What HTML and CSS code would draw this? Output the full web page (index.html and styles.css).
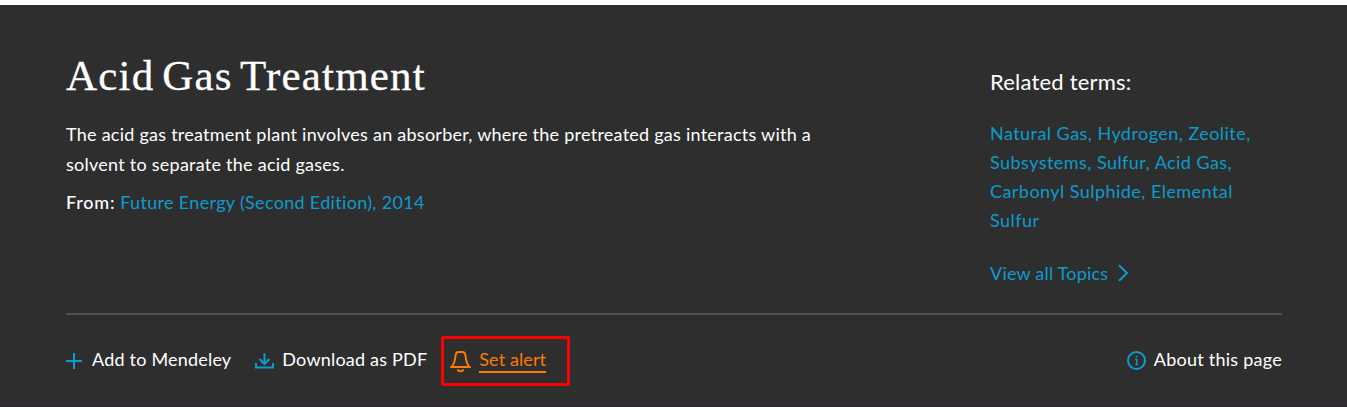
FILE: index.html
```html
<!DOCTYPE html>
<html lang="en">
<head>
    <meta charset="UTF-8">
    <meta name="viewport" content="width=device-width, initial-scale=1.0">
    <title>Acid Gas Treatment</title>
    <link rel="stylesheet" href="styles.css">
</head>
<body>
    <header class="topic-header">
        <div class="topic-main">
            <section class="topic-intro">
                <h1>Acid Gas Treatment</h1>
                <p class="description">The acid gas treatment plant involves an absorber, where the pretreated gas interacts with a solvent to separate the acid gases.</p>
                <p class="source"><span class="from">From:</span> <a href="#">Future Energy (Second Edition), 2014</a></p>
            </section>

            <!-- Related terms -->
            <aside class="related">
                <h2>Related terms:</h2>
                <p class="terms">
                    <a href="#">Natural Gas</a>, <a href="#">Hydrogen</a>, <a href="#">Zeolite</a>,
                    <a href="#">Subsystems</a>, <a href="#">Sulfur</a>, <a href="#">Acid Gas</a>,
                    <a href="#">Carbonyl Sulphide</a>, <a href="#">Elemental Sulfur</a>
                </p>
                <a class="view-all" href="#">
                    <span>View all Topics</span>
                    <svg width="11" height="18" viewBox="0 0 11 18">
                        <path d="M1 1.3L9 9L1 16.7"/>
                    </svg>
                </a>
            </aside>
        </div>

        <!-- Page actions -->
        <nav class="actions">
            <a class="action mendeley" href="#">
                <svg width="16" height="16" viewBox="0 0 16 16">
                    <path d="M8 0V16M0 8H16"/>
                </svg>
                <span>Add to Mendeley</span>
            </a>
            <a class="action download" href="#">
                <svg width="19" height="16" viewBox="0 0 19 16">
                    <path d="M9.5 0.5V10.5M4.5 6L9.5 11L14.5 6M1 10V14.5H18V10"/>
                </svg>
                <span>Download as PDF</span>
            </a>
            <a class="action alert" href="#">
                <svg width="21" height="22" viewBox="0 0 21 22">
                    <path d="M1.5 16H19.5C17 13.5 16.2 11 15.6 5.5C15.3 2.6 14.5 1 12.5 1H8.5C6.5 1 5.7 2.6 5.4 5.5C4.8 11 4 13.5 1.5 16Z"/>
                    <path d="M7.5 18.3C8.5 20.9 12.5 20.9 13.5 18.3"/>
                </svg>
                <span>Set alert</span>
            </a>
            <a class="action about" href="#">
                <svg width="19" height="19" viewBox="0 0 19 19">
                    <circle cx="9.5" cy="9.5" r="8.5"/>
                    <path d="M9.5 4.8V6.6M8.2 8.5H9.7V13.8M8.4 13.5H11" class="thin"/>
                </svg>
                <span>About this page</span>
            </a>
        </nav>
    </header>
</body>
</html>
```
FILE: styles.css
```css
:root {
    --background-color: #2e2e2e;
    --text-color: #fff;
    --link-color: #0c9ccc;
    --alert-color: #ff7b00;
    --line-color: #505050;
}

* {
    margin: 0;
    padding: 0;
    box-sizing: border-box;
}

body {
    background-color: #fff;
    color: var(--text-color);
    font-family: Lato, sans-serif;
    font-size: 18px;
    line-height: 30px;
    letter-spacing: 0.25px;
    overflow: hidden;
}

a {
    color: var(--link-color);
    text-decoration: none;
}

svg {
    fill: none;
    stroke: var(--link-color);
    stroke-width: 2;
}

.topic-header {
    height: 402px;
    margin-top: 5px;
    padding: 46px 65px 0 66px;
    background-color: var(--background-color);
    border-bottom: 1px solid #2b262b;
}

.topic-main {
    display: flex;
    justify-content: space-between;
    height: 264px;
    border-bottom: 2px solid var(--line-color);
}

.topic-intro {
    width: 770px;
}

h1 {
    margin-bottom: 18px;
    font-family: "Liberation Serif", serif;
    font-size: 43px;
    font-weight: 400;
    line-height: 50px;
    letter-spacing: 1.2px;
    word-spacing: -4px;
    -webkit-text-stroke: 0.3px var(--text-color);
}

.source {
    margin-top: 8px;
    letter-spacing: 0.32px;
}

.from {
    font-weight: 500;
    letter-spacing: 0.8px;
}

.related {
    width: 292px;
    padding-top: 16px;
}

h2 {
    margin-bottom: 22px;
    font-size: 22px;
    font-weight: 400;
    line-height: 30px;
    letter-spacing: 0.2px;
}

.terms {
    width: 275px;
    color: var(--link-color);
    line-height: 29px;
    letter-spacing: 0.45px;
}

.view-all {
    display: flex;
    align-items: center;
    gap: 10px;
    margin-top: 23px;
    letter-spacing: 0.2px;
}

/* Bottom action bar */
.actions {
    display: flex;
    height: 30px;
    margin-top: 29px;
}

.action {
    display: flex;
    align-items: center;
    color: var(--text-color);
    letter-spacing: 0.2px;
}

.action svg {
    margin-top: 3px;
}

.mendeley {
    gap: 10px;
}

.download {
    gap: 8px;
    margin-left: 24px;
}

.alert {
    position: relative;
    gap: 8px;
    margin-left: 23px;
    color: var(--alert-color);
    letter-spacing: 0.1px;
}

.alert svg {
    margin-top: 6px;
    stroke: var(--alert-color);
}

.alert span {
    height: 29px;
    margin-top: -1px;
    border-bottom: 2px solid var(--alert-color);
}

/* Highlight frame around the alert link */
.alert::before {
    content: "";
    position: absolute;
    top: -8px;
    left: -9px;
    width: 129px;
    height: 50px;
    box-sizing: border-box;
    border: 3px solid #ff0000;
    border-radius: 2px;
}

.about {
    gap: 8px;
    margin-left: auto;
    letter-spacing: 0.25px;
}

.thin {
    stroke-width: 1.5;
}
```
